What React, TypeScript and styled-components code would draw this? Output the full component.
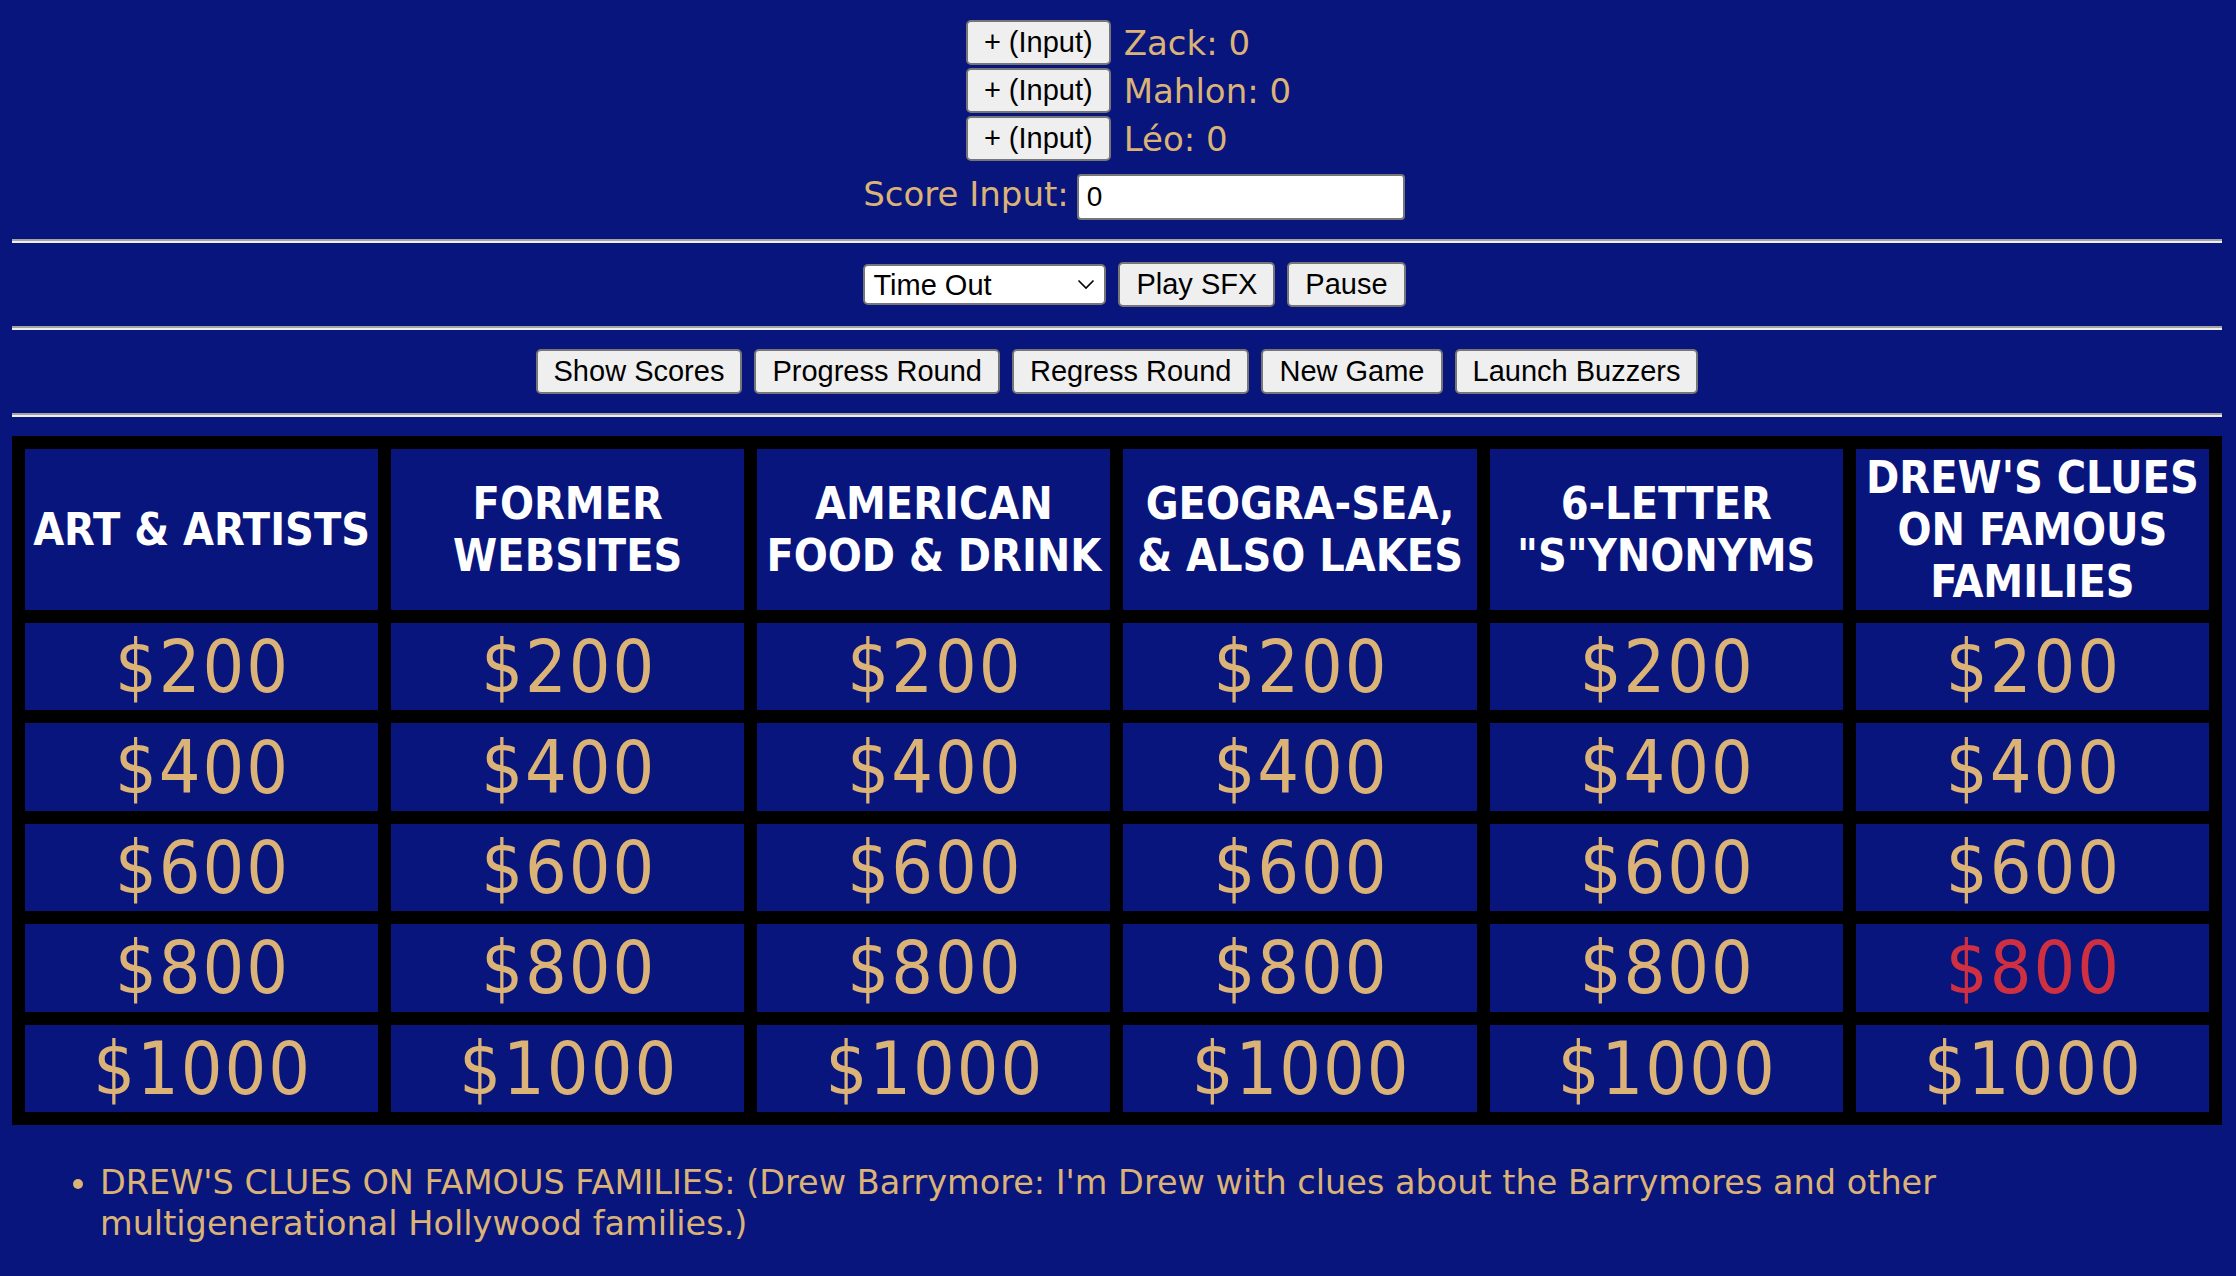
import React from "react";
import styled, { createGlobalStyle } from "styled-components";

const BLUE = "#08157c";
const GOLD = "#dcb377";
const RED = "#cf3041";

const GlobalStyle = createGlobalStyle`
  html, body {
    margin: 0;
    padding: 0;
    background: ${BLUE};
  }
  body {
    font-family: "DejaVu Sans", sans-serif;
  }
`;

const Page = styled.div`
  display: flex;
  flex-direction: column;
  padding: 20px 14px 24px 12px;
`;

const TopSection = styled.section`
  display: flex;
  flex-direction: column;
  align-items: center;
  gap: 13px;
`;

const PlayerList = styled.div`
  display: grid;
  grid-template-columns: auto auto;
  column-gap: 13px;
  row-gap: 3px;
  align-items: center;
  margin-left: 23px;
`;

const Button = styled.button`
  height: 45px;
  padding: 0 16px;
  font-family: "Liberation Sans", Arial, sans-serif;
  font-size: 29px;
  color: #000;
  background: #efefef;
  border: 2px solid #767676;
  border-radius: 5px;
  white-space: nowrap;
  cursor: pointer;
`;

const ScoreLabel = styled.span`
  font-family: "DejaVu Sans", sans-serif;
  font-size: 34px;
  line-height: 1;
  color: ${GOLD};
  white-space: nowrap;
`;

const ScoreInputRow = styled.div`
  display: flex;
  align-items: baseline;
  gap: 8px;
  margin-left: 34px;
`;

const TextInput = styled.input`
  box-sizing: border-box;
  width: 328px;
  height: 46px;
  padding: 0 8px;
  font-family: "Liberation Sans", Arial, sans-serif;
  font-size: 28px;
  color: #000;
  background: #fff;
  border: 2px solid #767676;
  border-radius: 4px;
`;

const Rule = styled.hr`
  width: 100%;
  height: 0;
  margin: 19px 0;
  border: 0;
  border-top: 2px solid #a3a3a3;
  border-bottom: 2px solid #eeeeee;
`;

const ControlRow = styled.div<{ $shift?: number }>`
  display: flex;
  justify-content: center;
  align-items: center;
  gap: 12px;
  margin-left: ${(p) => (p.$shift ?? 0) * 2}px;
`;

const SelectWrap = styled.div`
  position: relative;
  display: flex;
`;

const Select = styled.select`
  box-sizing: border-box;
  appearance: none;
  width: 243px;
  height: 41px;
  padding: 0 40px 0 8px;
  font-family: "Liberation Sans", Arial, sans-serif;
  font-size: 29px;
  color: #000;
  background: #fff;
  border: 2px solid #767676;
  border-radius: 5px;
`;

const Chevron = styled.svg`
  position: absolute;
  right: 11px;
  top: 15px;
  width: 18px;
  height: 11px;
  pointer-events: none;
`;

const Board = styled.div`
  display: grid;
  grid-template-columns: repeat(6, 1fr);
  grid-template-rows: auto repeat(5, 87.4px);
  gap: 13px;
  padding: 13px;
  background: #000;
`;

const CategoryCell = styled.div`
  display: flex;
  align-items: center;
  justify-content: center;
  padding: 2.5px 3px;
  background: ${BLUE};
  color: #fff;
  font-family: "DejaVu Sans Condensed", "DejaVu Sans", sans-serif;
  font-weight: 700;
  font-size: 44.5px;
  line-height: 52px;
  text-align: center;
  text-transform: uppercase;
`;

const ValueCell = styled.div<{ $active?: boolean }>`
  display: flex;
  align-items: center;
  justify-content: center;
  padding-left: 2px;
  background: ${BLUE};
  color: ${(p) => (p.$active ? RED : GOLD)};
  font-family: "DejaVu Sans Condensed", "DejaVu Sans", sans-serif;
  font-size: 73px;
  letter-spacing: 2px;
  line-height: 1;
  cursor: pointer;
`;

const ClueList = styled.ul`
  margin: 37px 0 0;
  padding: 0 0 0 88px;
  color: ${GOLD};
  font-family: "DejaVu Sans", sans-serif;
  font-size: 33.5px;
  line-height: 41px;
`;

const players = ["Zack", "Mahlon", "Léo"];

const categories = [
  "ART & ARTISTS",
  "FORMER WEBSITES",
  "AMERICAN FOOD & DRINK",
  "GEOGRA-SEA, & ALSO LAKES",
  '6-LETTER "S"YNONYMS',
  "DREW'S CLUES ON FAMOUS FAMILIES",
];

const values = [200, 400, 600, 800, 1000];

export default function App() {
  return (
    <>
      <GlobalStyle />
      <Page>
        <TopSection>
          <PlayerList>
            {players.map((name) => (
              <React.Fragment key={name}>
                <Button>+ (Input)</Button>
                <ScoreLabel>{name}: 0</ScoreLabel>
              </React.Fragment>
            ))}
          </PlayerList>
          <ScoreInputRow>
            <ScoreLabel>Score Input:</ScoreLabel>
            <TextInput defaultValue="0" />
          </ScoreInputRow>
        </TopSection>
        <Rule />
        <ControlRow $shift={17.5}>
          <SelectWrap>
            <Select defaultValue="Time Out">
              <option>Time Out</option>
              <option>Daily Double</option>
              <option>Final Jeopardy</option>
            </Select>
            <Chevron viewBox="0 0 18 11">
              <path d="M1.5 1.5 L9 9 L16.5 1.5" fill="none" stroke="#000" strokeWidth="1.6" />
            </Chevron>
          </SelectWrap>
          <Button>Play SFX</Button>
          <Button>Pause</Button>
        </ControlRow>
        <Rule />
        <ControlRow>
          <Button>Show Scores</Button>
          <Button>Progress Round</Button>
          <Button>Regress Round</Button>
          <Button>New Game</Button>
          <Button>Launch Buzzers</Button>
        </ControlRow>
        <Rule />
        <Board>
          {categories.map((c) => (
            <CategoryCell key={c}>{c}</CategoryCell>
          ))}
          {values.map((v) =>
            categories.map((c, ci) => (
              <ValueCell key={c + v} $active={ci === 5 && v === 800}>
                ${v}
              </ValueCell>
            ))
          )}
        </Board>
        <ClueList>
          <li>
            DREW'S CLUES ON FAMOUS FAMILIES: (Drew Barrymore: I'm Drew with clues about the
            Barrymores and other multigenerational Hollywood families.)
          </li>
        </ClueList>
      </Page>
    </>
  );
}
